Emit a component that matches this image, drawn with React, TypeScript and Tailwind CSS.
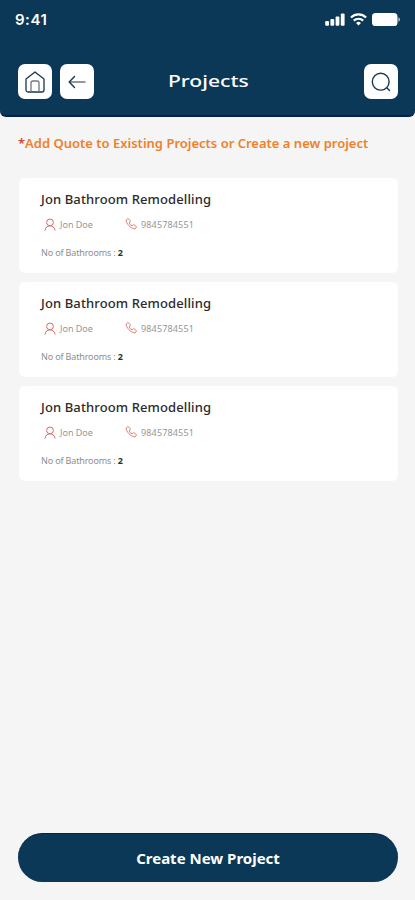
import type { ReactNode } from "react";

interface Project {
  id: number;
  title: string;
  client: string;
  phone: string;
  bathrooms: number;
}

const PROJECTS: Project[] = [
  { id: 1, title: "Jon Bathroom Remodelling", client: "Jon Doe", phone: "9845784551", bathrooms: 2 },
  { id: 2, title: "Jon Bathroom Remodelling", client: "Jon Doe", phone: "9845784551", bathrooms: 2 },
  { id: 3, title: "Jon Bathroom Remodelling", client: "Jon Doe", phone: "9845784551", bathrooms: 2 },
];

function StatusBar() {
  return (
    <div className="flex h-[38px] items-center justify-between pl-[15px] pr-[15px] text-white">
      <span className="font-['Inter',sans-serif] text-[15px] font-semibold leading-none tracking-[0.5px]">9:41</span>
      <div className="flex items-center gap-[5px]">
        <svg width="20" height="13" viewBox="0 0 20 13" fill="currentColor">
          <rect x="0.2" y="8" width="3.8" height="4.8" rx="1" />
          <rect x="5.4" y="6" width="3.8" height="6.8" rx="1" />
          <rect x="10.6" y="3.4" width="3.8" height="9.4" rx="1" />
          <rect x="15.8" y="0.4" width="3.8" height="12.4" rx="1" />
        </svg>
        <svg width="17" height="13" viewBox="0 0 18 13" fill="none" stroke="currentColor" strokeWidth="2.3">
          <path d="M1 4.4a11.5 11.5 0 0 1 16 0" />
          <path d="M4 7.7a7.3 7.3 0 0 1 10 0" />
          <path d="M9 12.8 6.4 10.2a3.8 3.8 0 0 1 5.2 0Z" fill="currentColor" stroke="none" />
        </svg>
        <svg width="28" height="13" viewBox="0 0 28 13" fill="currentColor">
          <rect x="0" y="0" width="25.5" height="13" rx="3.6" />
          <path d="M26.4 4.2c1 .4 1.600 1.300 1.600 2.300s-.6 1.900-1.600 2.300Z" opacity="0.7" />
        </svg>
      </div>
    </div>
  );
}

function IconButton({ label, children }: { label: string; children: ReactNode }) {
  return (
    <button
      aria-label={label}
      className="flex h-[35px] w-[34px] items-center justify-center rounded-[7px] bg-white text-[#17384f]"
    >
      {children}
    </button>
  );
}

function ProjectCard({ project }: { project: Project }) {
  return (
    <div className="h-[95px] rounded-[6px] bg-white pl-[22px] pt-[11px]">
      <h2 className="h-5 whitespace-nowrap text-[13px] font-medium leading-5 tracking-[0.12px] text-[#2b2b2b]">
        {project.title}
      </h2>
      <div className="mt-[5px] flex h-5 items-center text-[9px] leading-none text-[#969696]">
        <div className="flex w-[82px] items-center gap-[4px] pl-[3px]">
          <svg width="12" height="13" viewBox="0 0 12 13" fill="none" stroke="#d96b68" strokeWidth="1">
            <circle cx="6" cy="4.4" r="3.4" />
            <path d="M1 12.2c.2-2.600 2.300-4.400 5-4.400s4.800 1.800 5 4.400" strokeLinecap="round" />
          </svg>
          <span className="whitespace-nowrap">{project.client}</span>
        </div>
        <div className="flex items-center gap-[4px] pl-[2px]">
          <svg width="12" height="12" viewBox="0 0 24 24" fill="none" stroke="#d96b68" strokeWidth="1.8">
            <path
              strokeLinejoin="round"
              d="M2.500 3.500 4 2c1.200-1 2.700-.9 3.700.2l2 2.500c1 1.300.8 2.700-.2 3.800L8.300 9.800c1.200 2.500 3.300 4.600 5.900 5.900l1.300-1.200c1.100-1 2.500-1.200 3.800-.2l2.500 2c1.100 1 1.200 2.500.2 3.700l-1.500 1.500C14.500 24 0 9.500 2.500 3.500Z"
            />
          </svg>
          <span className="tracking-[0.15px]">{project.phone}</span>
        </div>
      </div>
      <p className="mt-[9px] h-5 text-[9px] leading-5 tracking-[-0.15px] text-[#8e8e8e]">
        No of Bathrooms : <span className="font-bold text-[#303030]">{project.bathrooms}</span>
      </p>
    </div>
  );
}

export default function App() {
  return (
    <div className="flex h-[900px] w-[415px] flex-col overflow-hidden bg-[#f5f5f5] font-['Noto_Sans',sans-serif]">
      <header className="h-[117px] shrink-0 rounded-b-[6px] border-b-2 border-[#06204a] bg-[#0a3856]">
        <StatusBar />
        <div className="mt-[26px] grid grid-cols-3 items-center pl-[18px] pr-[17px]">
          <div className="flex gap-2">
            <IconButton label="Home">
              <svg width="20" height="22" viewBox="0 0 20 22" fill="none" stroke="currentColor" strokeWidth="1.3">
                <path d="M1 8 10 1l9 7v11a2 2 0 0 1-2 2H3a2 2 0 0 1-2-2Z" strokeLinejoin="round" />
                <path d="M6 21v-9a2 2 0 0 1 2-2h4a2 2 0 0 1 2 2v9" stroke="#6b7880" />
              </svg>
            </IconButton>
            <IconButton label="Back">
              <svg width="18" height="14" viewBox="0 0 18 14" fill="none" stroke="currentColor" strokeWidth="1.4">
                <path d="M2 7H17" stroke="#6b7880" strokeLinecap="round" />
                <path d="M6.5 1.500 1.200 7l5.300 5.500" strokeLinecap="round" strokeLinejoin="round" />
              </svg>
            </IconButton>
          </div>
          <h1 className="scale-x-[1.32] pb-[2px] text-center text-[16px] font-medium leading-none text-white">Projects</h1>
          <div className="flex justify-end">
            <IconButton label="Search">
              <svg width="20" height="20" viewBox="0 0 20 20" fill="none" stroke="currentColor" strokeWidth="1.4">
                <circle cx="9.7" cy="9.7" r="8.4" />
                <path d="m15.8 15.8 2.700 2.700" strokeLinecap="round" />
              </svg>
            </IconButton>
          </div>
        </div>
      </header>

      <main className="flex flex-1 flex-col pl-[18px] pr-[17px]">
        <p className="mt-[16px] h-5 whitespace-nowrap text-[13px] font-semibold leading-5 text-[#f08029]">
          <span className="text-[#c94a33]">*</span>Add Quote to Existing Projects or Create a new project
        </p>
        <div className="mt-[25px] flex flex-col gap-[9px] pl-[1px]">
          {PROJECTS.map((p) => (
            <ProjectCard key={p.id} project={p} />
          ))}
        </div>
        <button className="mb-[18px] mt-auto h-[49px] rounded-full border-t border-[#06204a] bg-[#0a3856] text-[15px] font-bold leading-none text-white">
          Create New Project
        </button>
      </main>
    </div>
  );
}
